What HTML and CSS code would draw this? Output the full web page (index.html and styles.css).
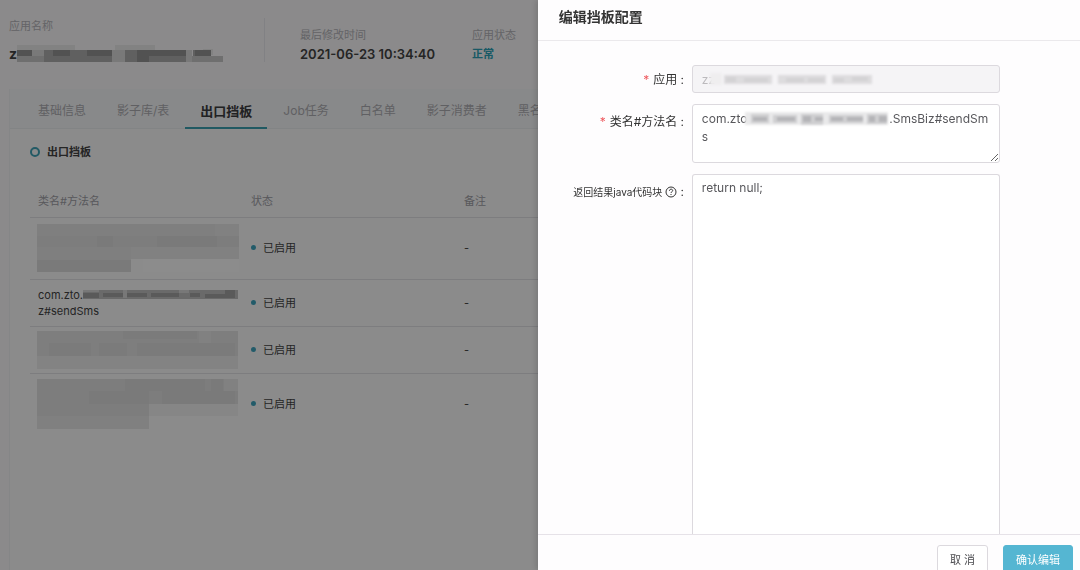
FILE: index.html
```html
<!DOCTYPE html>
<html lang="zh-CN">
<head>
<meta charset="utf-8">
<title>编辑挡板配置</title>
<link rel="stylesheet" href="styles.css">
</head>
<body>
<main class="page">
  <header class="summary">
    <div class="summary-app">
      <div class="label">应用名称</div>
      <div class="app-name">z<svg class="mosaic" width="206" height="18" viewBox="0 0 206 18" aria-hidden="true">
        <path fill="#ededed" d="M0 0h58v6H0zM98 0h40v6H98zM186 4h10v6h-10z"/>
        <path fill="#cacaca" d="M0 11h194v6H0zM194 11h12v6h-12z"/>
        <path fill="#b0b0b0" d="M0 5h95v6H0zM27 11h68v6H27zM108 5h61v12h-61zM176 5h18v6h-18z"/>
        <path fill="#969696" d="M0 5h15v6H0zM36 5h17v6H36zM70 5h25v6H70zM120 5h49v6h-49zM178 5h16v6h-16zM120 11h12v6h-12z"/>
        <path fill="#dcdcdc" d="M15 5h12v6H15zM95 5h13v12H95zM169 5h6v12h-6z"/>
      </svg></div>
    </div>
    <div class="summary-item time">
      <div class="label">最后修改时间</div>
      <div class="time-value">2021-06-23 10:34:40</div>
    </div>
    <div class="summary-item">
      <div class="label">应用状态</div>
      <div class="state-value">正常</div>
    </div>
  </header>
  <section class="card">
    <nav class="tabs" role="tablist">
      <button class="tab" role="tab">基础信息</button>
      <button class="tab" role="tab">影子库/表</button>
      <button class="tab active" role="tab" aria-selected="true">出口挡板</button>
      <button class="tab" role="tab">Job任务</button>
      <button class="tab" role="tab">白名单</button>
      <button class="tab" role="tab">影子消费者</button>
      <button class="tab" role="tab">黑名单</button>
    </nav>
    <div class="card-body">
      <h2 class="section-title"><span class="ring"></span>出口挡板</h2>
      <table class="table">
        <thead>
          <tr><th>类名#方法名</th><th>状态</th><th>备注</th><th></th></tr>
        </thead>
        <tbody>
          <tr class="tall">
            <td><svg class="mosaic block" width="202" height="48" viewBox="0 0 202 48" aria-hidden="true">
              <path fill="#ebebeb" d="M0 0h202v35H0zM0 35h94v13H0z"/>
              <path fill="#fff" d="M106 35h96v13H106z"/>
              <path fill="#e8e8e8" d="M0 0h178v23H0zM0 23h94v25H0z"/>
              <path fill="#e3e3e3" d="M0 12h202v11H0z"/>
              <path fill="#dfdfdf" d="M60 12h16v11H60zM120 12h60v11h-60zM0 36h94v12H0z"/>
            </svg></td>
            <td><span class="dot"></span>已启用</td><td>-</td><td></td>
          </tr>
          <tr class="short">
            <td><div class="method">com.zto.<svg class="mosaic" width="155" height="10" viewBox="0 0 155 10" aria-hidden="true">
              <path fill="#c2c2c2" d="M0 1h155v9H0z"/>
              <path fill="#a5a5a5" d="M0 4h16v5H0zM20 4h20v4H20zM44 4h20v4H44zM68 4h28v4H68zM107 4h10v4h-10zM122 5h26v4h-26zM142 1h10v8h-10z"/>
              <path fill="#dadada" d="M0 1h16v2H0zM40 1h4v8h-4zM96 1h10v3H96z"/>
            </svg><br>z#sendSms</div></td>
            <td><span class="dot"></span>已启用</td><td>-</td><td></td>
          </tr>
          <tr class="short">
            <td><svg class="mosaic block" width="201" height="38" viewBox="0 0 201 38" aria-hidden="true">
              <path fill="#efefef" d="M0 0h201v38H0z"/>
              <path fill="#e6e6e6" d="M0 0h201v25H0z"/>
              <path fill="#e1e1e1" d="M12 12h42v13H12zM62 12h28v13H62zM100 12h98v13H100zM86 0h74v8H86z"/>
              <path fill="#ebebeb" d="M162 0h12v12h-12z"/>
            </svg></td>
            <td><span class="dot"></span>已启用</td><td>-</td><td></td>
          </tr>
          <tr class="tall last">
            <td><svg class="mosaic block" width="201" height="50" viewBox="0 0 201 50" aria-hidden="true">
              <path fill="#eaeaea" d="M0 0h201v25H0zM0 37h112v13H0z"/>
              <path fill="#f5f5f5" d="M112 25h89v12h-89z"/>
              <path fill="#e3e3e3" d="M0 0h201v25H112v12H0z"/>
              <path fill="#dedede" d="M52 12h60v13H52zM88 0h80v12H88zM125 12h73v13h-73zM174 0h12v12h-12z"/>
              <path fill="#ebebeb" d="M187 0h14v12h-14z"/>
            </svg></td>
            <td><span class="dot"></span>已启用</td><td>-</td><td></td>
          </tr>
        </tbody>
      </table>
    </div>
  </section>
</main>
<div class="mask"></div>
<aside class="drawer" role="dialog" aria-labelledby="drawer-title">
  <h1 class="drawer-title" id="drawer-title">编辑挡板配置</h1>
  <form class="form" id="edit-form">
    <label class="form-label" for="app"><span class="required">*</span>应用<span class="colon">:</span></label>
    <div class="control">
      <input class="field" id="app" type="text" value="zz" disabled>
      <svg class="mosaic soft over-app" width="166" height="16" viewBox="0 0 166 16" aria-hidden="true">
        <path fill="#efeeef" d="M0 2h12v12H0z"/>
        <path fill="#dddcde" d="M14 4h48v9H14zM68 4h48v9H68zM122 4h40v9h-40z"/>
        <path fill="#d3d2d4" d="M16 6h10v5H16zM34 7h24v4H34zM76 7h18v4H76zM98 7h16v4H98zM124 7h10v4h-10zM142 6h16v4h-16z"/>
      </svg>
    </div>
    <label class="form-label" for="method"><span class="required">*</span>类名#方法名<span class="colon">:</span></label>
    <div class="control">
      <textarea class="field method-field" id="method">com.zto&nbsp;&nbsp;&nbsp;&nbsp;&nbsp;&nbsp;&nbsp;&nbsp;&nbsp;&nbsp;&nbsp;&nbsp;&nbsp;&nbsp;&nbsp;&nbsp;&nbsp;&nbsp;&nbsp;&nbsp;&nbsp;&nbsp;&nbsp;&nbsp;&nbsp;&nbsp;&nbsp;&nbsp;&nbsp;&nbsp;&nbsp;&nbsp;&nbsp;&nbsp;&nbsp;&nbsp;&nbsp;&nbsp;&nbsp;&nbsp;&nbsp;&nbsp;.SmsBiz#sendSms</textarea>
      <svg class="mosaic soft over-method" width="143" height="14" viewBox="0 0 143 14" aria-hidden="true">
        <path fill="#e9e9ea" d="M0 0h143v13H0z"/>
        <path fill="#cfcfd1" d="M6 2h18v9H6zM28 3h24v8H28zM56 2h22v11H56zM84 3h34v8H84zM122 2h20v10h-20z"/>
        <path fill="#b4b4b7" d="M8 5h14v4H8zM32 5h18v4H32zM58 4h8v6h-8zM70 5h8v4h-8zM86 5h12v4H86zM102 5h16v4h-16zM124 4h6v6h-6zM134 4h8v6h-8z"/>
      </svg>
    </div>
    <label class="form-label small" for="code">返回结果java代码块<svg class="help" width="12" height="12" viewBox="0 0 12 12" fill="none" stroke="#333" aria-hidden="true">
      <circle cx="6" cy="6" r="5"/>
      <path d="M4.4 4.8c0-2.2 3.3-2.1 3.3-.2 0 1.2-1.7 1.1-1.7 2.4M6 8v1"/>
    </svg><span class="colon">:</span></label>
    <div class="control">
      <textarea class="field code-field" id="code">return null;</textarea>
    </div>
  </form>
  <footer class="footer">
    <button class="btn" type="button">取 消</button>
    <button class="btn primary" type="submit" form="edit-form">确认编辑</button>
  </footer>
</aside>
</body>
</html>
```
FILE: styles.css
```css
* { box-sizing: border-box; }
body {
  margin: 0;
  height: 100vh;
  overflow: hidden;
  background: #fdfcfd;
  font-family: Inter, "Noto Sans CJK SC", sans-serif;
  font-size: 11px;
  line-height: 16px;
  color: #444;
}
button, input, textarea { font: inherit; }
.mosaic { flex: none; }
.soft { filter: blur(1px); }

.page {
  display: flex;
  flex-direction: column;
  height: 100vh;
  padding-left: 9px;
}
.summary {
  display: flex;
  align-items: flex-start;
  height: 89px;
  padding-top: 18px;
}
.summary-app {
  width: 256px;
  height: 44px;
  border-right: 1px solid #ececf0;
}
.label { color: #b6b6bb; }
.app-name {
  display: flex;
  align-items: center;
  margin-top: 11px;
  font-size: 14px;
  font-weight: 700;
}
.summary-item { padding-top: 9px; }
.time { width: 207px; padding-left: 35px; }
.time-value {
  margin-top: 3px;
  font-size: 13px;
  font-weight: 600;
}
.state-value {
  margin-top: 3px;
  font-weight: 700;
  color: #2fa3b8;
}

.card {
  flex: 1;
  border-left: 1px solid #f2f4f6;
  background: #fdfdfe;
}
.tabs {
  display: flex;
  gap: 1px;
  height: 40px;
  padding-left: 13px;
  background: #f7f9fb;
  border-bottom: 1px solid #edf0f3;
}
.tab {
  flex: none;
  height: 40px;
  padding: 5px 15px 0;
  border: 0;
  border-bottom: 2px solid transparent;
  background: none;
  font-size: 12px;
  color: #b0b0b4;
}
.tab.active {
  border-color: #3ba2b2;
  font-size: 13px;
  font-weight: 700;
  color: #3c3c40;
}
.card-body { padding: 15px 0 0 20px; }
.section-title {
  display: flex;
  align-items: center;
  gap: 7px;
  margin: 0;
  font-size: 11px;
  font-weight: 700;
}
.ring {
  width: 10px;
  height: 10px;
  border: 2px solid #40a5b8;
  border-radius: 50%;
}
.table {
  width: 100%;
  margin-top: 24px;
  border-collapse: collapse;
  table-layout: fixed;
}
.table th, .table td {
  padding: 0 0 0 8px;
  border-bottom: 1px solid #e3e3e7;
  text-align: left;
}
.table th:not(:last-child) { width: 213px; }
.table th {
  height: 33px;
  padding-top: 2px;
  font-weight: 400;
  color: #a2a2a8;
}
.table .tall td { height: 62px; }
.table .short td { height: 47px; }
.table .last td { border-bottom: 0; }
.block { display: block; margin-left: -1px; }
.dot {
  display: inline-block;
  width: 5px;
  height: 5px;
  margin-right: 7px;
  border-radius: 50%;
  background: #3fa6c0;
  vertical-align: 2px;
}

.mask {
  position: fixed;
  inset: 0;
  background: rgba(0, 0, 0, 0.45);
}
.drawer {
  position: fixed;
  inset: 0 0 0 auto;
  display: flex;
  flex-direction: column;
  width: 50.2%;
  overflow: hidden;
  background: #fefdfe;
  box-shadow: -2px 0 6px rgba(0, 0, 0, 0.15);
}
.drawer-title {
  flex: none;
  margin: 0;
  padding: 5px 21px 11px;
  border-bottom: 1px solid #ebe9ec;
  font-size: 14px;
  font-weight: 700;
  line-height: 24px;
  color: #333;
}
.form {
  flex: 1;
  display: grid;
  grid-template-columns: 146px 1fr;
  grid-template-rows: 28px 59px 1fr;
  gap: 11px 8px;
  min-height: 0;
  padding: 24px 80px 0 0;
}
.form-label {
  display: flex;
  align-items: center;
  justify-content: flex-end;
  height: 28px;
  margin-top: 1px;
  font-size: 12px;
  color: #333;
}
.form-label:not(:first-child) { margin-top: 4px; }
.small { font-size: 10px; }
.required { margin-right: 4px; color: #ee5a5f; }
.colon { margin-left: 3px; font-size: 12px; }
.help { margin-left: 3px; }
.control { position: relative; min-height: 0; }
.field {
  display: block;
  width: 100%;
  height: 100%;
  margin: 0;
  padding: 5px 8px 4px 9px;
  border: 1px solid #dcd9de;
  border-radius: 3px;
  outline: 0;
  background: #fff;
  font-size: 12px;
  line-height: 18px;
  color: #58585c;
}
.field:disabled { background: #f5f4f6; color: #bcbabd; }
.method-field { word-break: break-all; overflow: hidden; }
.code-field {
  padding-top: 4px;
  border-bottom: 0;
  border-radius: 3px 3px 0 0;
  resize: none;
}
.over-app { position: absolute; left: 18px; top: 6px; }
.over-method { position: absolute; left: 53px; top: 8px; }
.footer {
  flex: 0 0 36px;
  display: flex;
  justify-content: flex-end;
  align-items: flex-start;
  gap: 15px;
  min-height: 0;
  height: 36px;
  padding: 10px 7px 0 0;
  border-top: 1px solid #e6e2e8;
}
.btn {
  flex: none;
  height: 29px;
  padding: 0 12px;
  border: 1px solid #dcd9de;
  border-radius: 3px;
  background: #fff;
  font-size: 11px;
  color: #4a4a4e;
}
.primary {
  border-color: #55b6d2;
  background: #55b6d2;
  color: #fff;
}
```
